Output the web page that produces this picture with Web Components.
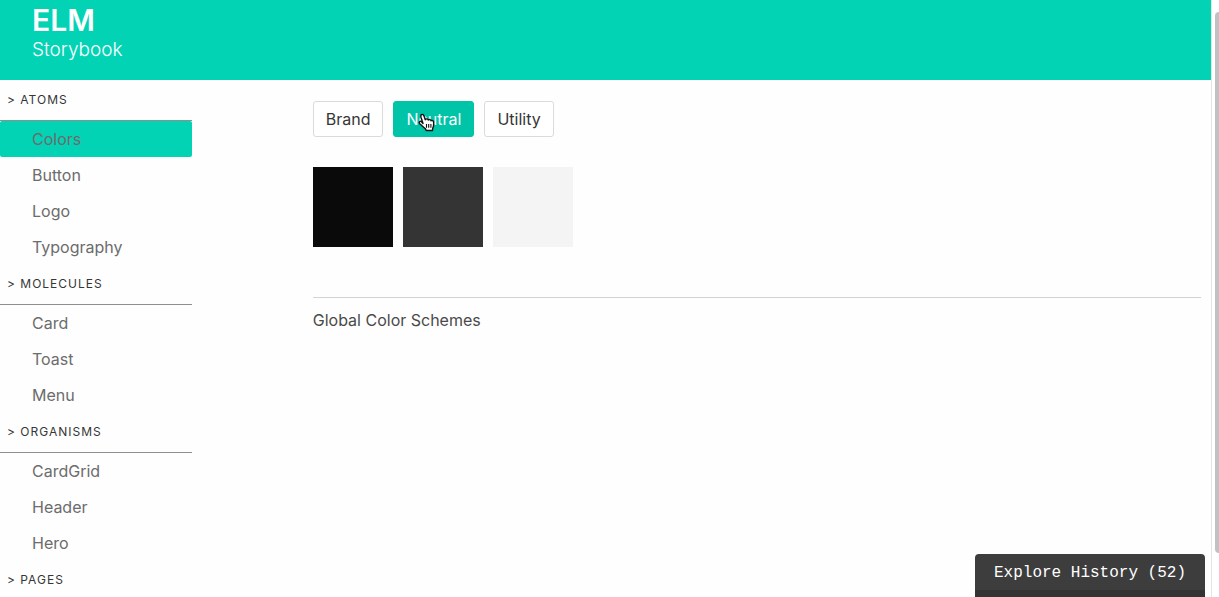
<!DOCTYPE html>
<html lang="en">
<head>
<meta charset="utf-8">
<meta name="viewport" content="width=device-width, initial-scale=1">
<title>ELM Storybook</title>
<style>
html, body { margin: 0; height: 100%; overflow: hidden; }
body { background: #fefefe; color: #4a4a4a; font: 16px/24px Inter, "Liberation Sans", sans-serif; }
</style>
</head>
<body>
<story-app>
  <story-header slot="header"></story-header>
  <story-menu slot="menu">
    <story-group label="Atoms">
      <story-link active>Colors</story-link><story-link>Button</story-link><story-link>Logo</story-link><story-link>Typography</story-link>
    </story-group>
    <story-group label="Molecules">
      <story-link>Card</story-link><story-link>Toast</story-link><story-link>Menu</story-link>
    </story-group>
    <story-group label="Organisms">
      <story-link>CardGrid</story-link><story-link>Header</story-link><story-link>Hero</story-link>
    </story-group>
    <story-group label="Pages"></story-group>
  </story-menu>
  <story-tabs>
    <story-button>Brand</story-button>
    <story-button active>Neutral</story-button>
    <story-button>Utility</story-button>
  </story-tabs>
  <color-swatches colors="#0a0a0a #343434 #f4f4f4"></color-swatches>
  <story-notes>Global Color Schemes</story-notes>
</story-app>
<history-button count="52"></history-button>

<script>
const define = (name, html, setup) => customElements.define(name, class extends HTMLElement {
  connectedCallback() {
    if (this.shadowRoot) return;
    const root = this.attachShadow({ mode: "open" });
    root.innerHTML = html;
    if (setup) setup(this, root);
  }
});

define("story-app", `
<style>
:host { display: flex; height: 100vh; overflow: hidden; }
.page { flex: 1; min-width: 0; border-right: 1px solid #e4e4e4; overflow: hidden; }
.columns { display: grid; grid-template-columns: 16.6667% 1fr 75%; }
main { grid-column: 3; padding: 21px 10px 10px; }
.track { flex: none; width: 7px; box-sizing: border-box; padding: 12px 0 44px 3px; background: #fff; }
.thumb { height: 100%; border-radius: 4px 0 0 4px; background: #c1c1c1; }
</style>
<div class="page">
  <slot name="header"></slot>
  <div class="columns"><slot name="menu"></slot><main><slot></slot></main></div>
</div>
<div class="track"><div class="thumb"></div></div>`);

define("story-header", `
<style>
:host { display: block; }
header { box-sizing: border-box; height: 80px; padding: 2px 32px; background: #03d3b5; color: #fff; }
h1, p { margin: 0; }
h1 { font-size: 30px; line-height: 36px; font-weight: 600; }
p { font-size: 19px; line-height: 24px; font-weight: 300; }
</style>
<header><h1>ELM</h1><p>Storybook</p></header>`);

define("story-menu", `
<style>:host { display: block; padding: 1px 10px 0 0; }</style>
<nav aria-label="Components"><slot></slot></nav>`);

define("story-group", `
<style>
:host { display: block; }
h2 { box-sizing: border-box; height: 40px; margin: 0; padding: 0 7px; border-bottom: 1px solid #8f8f8f;
  color: #363636; font-size: 12px; line-height: 38px; font-weight: 400; letter-spacing: 1px; text-transform: uppercase; white-space: nowrap; }
</style>
<section><h2></h2><slot></slot></section>`,
(el, root) => root.querySelector("h2").textContent = "> " + el.getAttribute("label"));

define("story-link", `
<style>
:host { display: block; }
a { display: block; padding: 6px 32px; border-radius: 2px; color: #6c6c6c; text-decoration: none; }
:host([active]) a { background: #03d3b5; }
</style>
<a href="#"><slot></slot></a>`);

define("story-tabs", `
<style>:host { display: flex; gap: 10px; }</style><slot></slot>`);

define("story-button", `
<style>
:host { display: block; position: relative; }
button { box-sizing: border-box; height: 36px; padding: 0 12px; border: 1px solid #dbdbdb; border-radius: 3px;
  background: #fff; color: #363636; font: inherit; cursor: pointer; }
:host([active]) button { background: #00c4a7; border-color: #00c4a7; color: #fff; }
svg { display: none; position: absolute; left: 25px; top: 12px; width: 17px; height: 19px; }
:host([active]) svg { display: block; }
</style>
<button type="button"><slot></slot></button>
<svg viewBox="0 0 17 19" aria-hidden="true">
<path d="M5 10.5 3 4.2C2.2 1.3 5 .3 6 3l1.3 3.8C8 5.4 10 5.8 10.3 7c.9-.9 2.4-.5 2.8.7 1-.6 2.4 0 2.5 1.4.2 2.4.2 4.4-.9 6.2l-.2 2.2H8.2l-.6-1.5C5.7 14 3.8 12.7 2 11 .2 9.2 2 7.7 3.5 8.7Z" fill="#fff" stroke="#111" stroke-width="1.4" stroke-linejoin="round"/>
<path d="M8.5 11v3.8M10.7 11v3.8M12.9 11v3.8" stroke="#111" stroke-width="1.1"/>
</svg>`);

define("color-swatches", `
<style>
:host { display: flex; gap: 10px; margin-top: 30px; }
div { width: 80px; height: 80px; }
</style>`,
(el, root) => el.getAttribute("colors").split(" ").forEach(color => {
  const swatch = document.createElement("div");
  swatch.style.background = color;
  root.append(swatch);
}));

define("story-notes", `
<style>
:host { display: block; margin-top: 50px; padding-top: 10px; border-top: 1px solid #d3d3d3; }
p { margin: 0; }
</style>
<p><slot></slot></p>`);

define("history-button", `
<style>
:host { display: block; position: fixed; right: 14px; bottom: 0; }
button { display: block; box-sizing: border-box; height: 43px; padding: 2px 19px 0; border: 0; border-bottom: 7px solid #333;
  border-radius: 4px 4px 0 0; background: #3d3d3d; color: #fff; font: 16px/34px "Courier New", "Liberation Mono", monospace; cursor: pointer; }
</style>
<button type="button"></button>`,
(el, root) => root.querySelector("button").textContent = `Explore History (${el.getAttribute("count")})`);
</script>
</body>
</html>
